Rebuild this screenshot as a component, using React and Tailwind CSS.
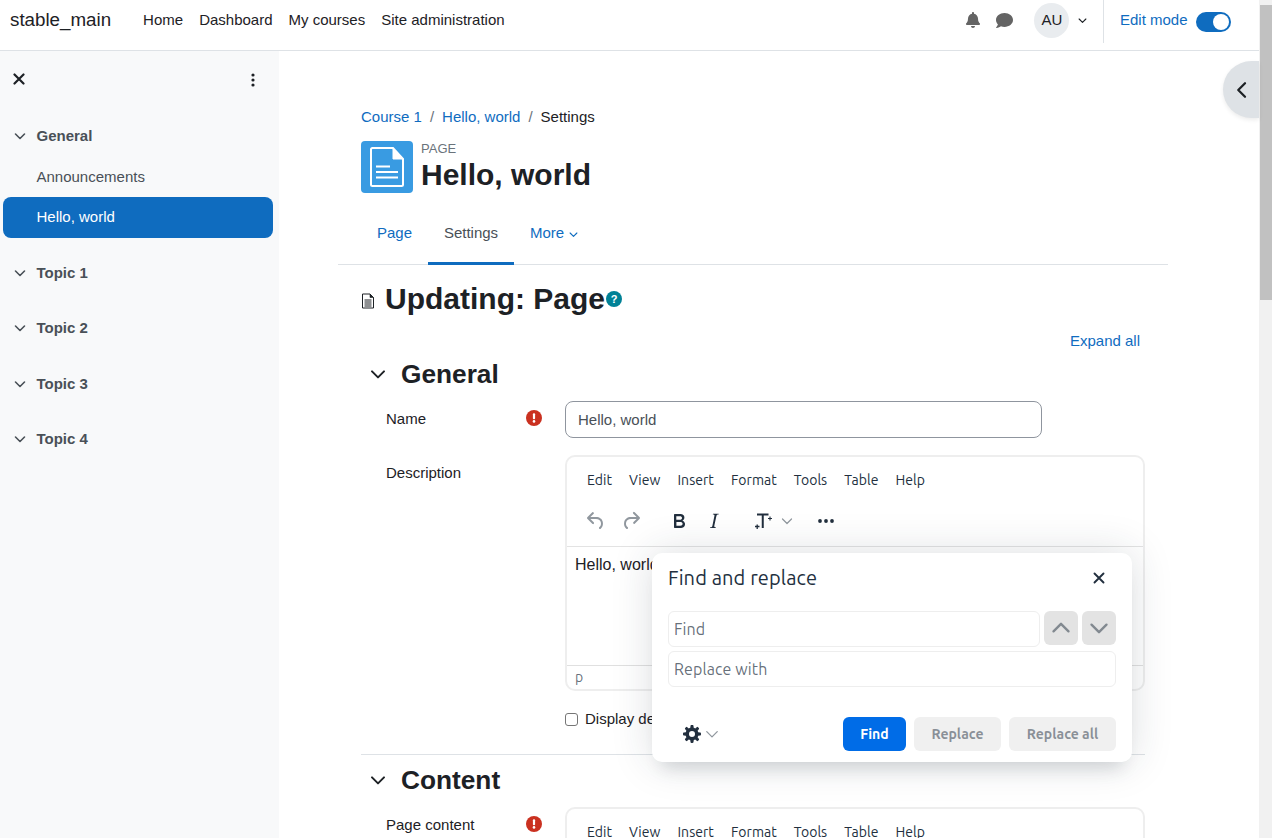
import React from "react";
import { FaBell, FaComment } from "react-icons/fa";

const SANS = "font-['Liberation_Sans',Arial,sans-serif]";
const TINY = "font-['Ubuntu','Noto_Sans',sans-serif]";

function Chevron({ className = "", size = 12, sw = 1.6 }) {
  return (
    <svg width={size} height={size} viewBox="0 0 12 12" className={className} fill="none" stroke="currentColor" strokeWidth={sw} strokeLinecap="round" strokeLinejoin="round">
      <path d="M1.5 4 6 8.5 10.5 4" />
    </svg>
  );
}

function XIcon({ size = 12, sw = 2 }) {
  return (
    <svg width={size} height={size} viewBox="0 0 12 12" fill="none" stroke="currentColor" strokeWidth={sw} strokeLinecap="round">
      <path d="M1.5 1.5 10.5 10.5M10.5 1.5 1.5 10.5" />
    </svg>
  );
}

function Required({ className = "" }) {
  return (
    <svg width="16" height="16" viewBox="0 0 16 16" className={className}>
      <circle cx="8" cy="8" r="8" fill="#ca3120" />
      <rect x="6.9" y="3.2" width="2.2" height="6" rx="1" fill="#fff" />
      <circle cx="8" cy="11.4" r="1.3" fill="#fff" />
    </svg>
  );
}

function TinyIcon({ d, className = "" }) {
  return (
    <svg width="24" height="24" viewBox="0 0 24 24" className={className} fill="currentColor">
      <path fillRule="evenodd" d={d} />
    </svg>
  );
}

const UNDO = "M6.4 8H12c3.7 0 6.2 2 6.8 5.1.6 2.7-.4 5.6-2.3 6.8a1 1 0 0 1-1-1.8c1.1-.7 1.8-2.7 1.4-4.6-.5-2.1-2.1-3.5-4.9-3.5H6.4l3.3 3.3a1 1 0 1 1-1.4 1.4l-5-5a1 1 0 0 1 0-1.4l5-5a1 1 0 0 1 1.4 1.4L6.4 8z";
const REDO = "M17.6 10H12c-2.8 0-4.4 1.4-4.9 3.5-.4 2 .3 3.9 1.4 4.6a1 1 0 1 1-1 1.8c-2-1.2-2.9-4.1-2.3-6.8.6-3 3-5.1 6.8-5.1h5.6l-3.3-3.3a1 1 0 1 1 1.4-1.4l5 5a1 1 0 0 1 0 1.4l-5 5a1 1 0 0 1-1.4-1.4l3.3-3.3z";
const BOLD = "M7.8 19c-.3 0-.5 0-.6-.2l-.2-.5V5.7c0-.2 0-.4.2-.5l.6-.2h5c1.5 0 2.7.3 3.5 1 .7.6 1.1 1.4 1.1 2.5a3 3 0 0 1-.6 1.9c-.4.6-1 1-1.6 1.2.4.1.9.3 1.3.6s.8.7 1 1.2c.4.4.5 1 .5 1.6 0 1.3-.4 2.3-1.3 3-.8.7-2.1 1-3.8 1H7.8zm5-8.3c.6 0 1.2-.1 1.6-.5.4-.3.6-.7.6-1.3 0-1.1-.8-1.7-2.3-1.7H9.3v3.5h3.4zm.5 6c.7 0 1.3-.1 1.7-.4.4-.4.6-.9.6-1.5s-.2-1-.7-1.4c-.4-.3-1-.4-2-.4H9.4v3.8h4z";
const ITALIC = "M16.7 4.7l-.1.9h-.3c-.6 0-1 0-1.4.3-.3.3-.4.6-.5 1.1l-2.1 9.8v.6c0 .5.4.8 1.4.8h.2l-.2.8H8l.2-.8h.2c1.1 0 1.8-.5 2-1.5l2-9.8.1-.5c0-.6-.4-.8-1.4-.8h-.3l.2-.9h5.8z";
const GEAR = "M20.1 13.5l-1.9.2a5.8 5.8 0 0 1-.6 1.5l1.2 1.5c.4.4.3 1 0 1.4l-.7.7a1 1 0 0 1-1.4 0l-1.5-1.2a6.2 6.2 0 0 1-1.5.6l-.2 1.9c0 .5-.5.9-1 .9h-1a1 1 0 0 1-1-.9l-.2-1.9a5.8 5.8 0 0 1-1.5-.6l-1.5 1.2a1 1 0 0 1-1.4 0l-.7-.7a1 1 0 0 1 0-1.4l1.2-1.5a6.2 6.2 0 0 1-.6-1.5l-1.9-.2a1 1 0 0 1-.9-1v-1c0-.5.4-1 .9-1l1.9-.2a5.8 5.8 0 0 1 .6-1.5L5.2 7.3a1 1 0 0 1 0-1.4l.7-.7a1 1 0 0 1 1.4 0l1.5 1.2a6.2 6.2 0 0 1 1.5-.6l.2-1.9c0-.5.5-.9 1-.9h1c.5 0 1 .4 1 .9l.2 1.9a5.8 5.8 0 0 1 1.5.6l1.5-1.2a1 1 0 0 1 1.4 0l.7.7c.3.4.4 1 0 1.4l-1.2 1.5a6.2 6.2 0 0 1 .6 1.5l1.9.2c.5 0 .9.5.9 1v1c0 .5-.4 1-.9 1zM12 15a3 3 0 1 0 0-6 3 3 0 0 0 0 6z";

function MenuBar() {
  return (
    <div className={`flex h-[37px] items-center pl-[20px] text-[14px] tracking-[0.04px] text-[#222f3e] ${TINY}`}>
      {["Edit", "View", "Insert", "Format", "Tools", "Table", "Help"].map((m) => (
        <span key={m} className="mr-[17px]">{m}</span>
      ))}
    </div>
  );
}

function SectionTitle({ children }) {
  return (
    <div className="flex items-center pl-[9px] text-[#1d2125]">
      <Chevron size={16} sw={1.5} />
      <h3 className="ml-[15px] text-[26.25px] font-bold leading-[32px]">{children}</h3>
    </div>
  );
}

function Topic({ label }) {
  return (
    <div className="flex h-[55.5px] items-center pl-[14px] text-[15px] font-bold text-[#495057]">
      <Chevron size={12} />
      <span className="ml-[10.5px]">{label}</span>
    </div>
  );
}

function Sidebar() {
  return (
    <aside className="w-[279px] shrink-0 bg-[#f8f9fa] pl-[3px] pr-[6px]">
      <div className="flex h-[61px] items-center justify-between pb-[5px] pl-[10px] pr-[18px] text-[#1d2125]">
        <XIcon size={12} sw={2.2} />
        <svg width="4" height="14" viewBox="0 0 4 14" fill="currentColor" className="mt-[2px]">
          <circle cx="2" cy="2" r="1.6" />
          <circle cx="2" cy="7" r="1.6" />
          <circle cx="2" cy="12" r="1.6" />
        </svg>
      </div>
      <div className="flex h-[48px] items-center pl-[11px] text-[15px] font-bold text-[#495057]">
        <Chevron size={12} />
        <span className="ml-[10.5px]">General</span>
      </div>
      <div className="flex h-[34px] items-center pl-[33.5px] text-[15px] text-[#495057]">Announcements</div>
      <div className="mt-[3px] flex h-[41px] items-center rounded-[8px] bg-[#0f6cbf] pl-[33.5px] text-[15px] text-white">Hello, world</div>
      <div className="mt-[7px] -ml-[3px]">
        {["Topic 1", "Topic 2", "Topic 3", "Topic 4"].map((t) => (
          <Topic key={t} label={t} />
        ))}
      </div>
    </aside>
  );
}

function Navbar() {
  return (
    <header className="flex h-[51px] shrink-0 items-start border-b border-[#dee2e6] bg-white pl-[10px] text-[#1d2125]">
      <div className="flex h-[40px] items-center text-[18.75px]">stable_main</div>
      <nav className="ml-[32px] flex h-[40px] items-center gap-[16px] text-[15px]">
        <span>Home</span>
        <span>Dashboard</span>
        <span>My courses</span>
        <span>Site administration</span>
      </nav>
      <div className="ml-auto flex items-start">
        <div className="flex h-[40px] items-center text-[#646464]">
          <FaBell size={16} />
          <FaComment size={17} className="ml-[15px]" />
        </div>
        <div className="ml-[21px] mt-[3px] flex h-[35px] w-[35px] items-center justify-center rounded-full bg-[#e9ecef] text-[15px]">AU</div>
        <div className="ml-[9px] mr-[16px] flex h-[40px] items-center">
          <Chevron size={9} sw={1.5} />
        </div>
        <div className="flex h-[43px] items-start border-l border-[#dee2e6] pl-[15.5px] pr-[28px]">
          <div className="flex h-[40px] items-center text-[15px] text-[#0f6cbf]">Edit mode</div>
          <div className="ml-[8.5px] mt-[12px] flex h-[20px] w-[35px] items-center justify-end rounded-full bg-[#0f6cbf] pr-[2px]">
            <div className="h-[16px] w-[16px] rounded-full bg-white" />
          </div>
        </div>
      </div>
    </header>
  );
}

function PageHeader() {
  return (
    <div className="px-[23px]">
      <div className="flex h-[21px] items-center text-[15px]">
        <span className="text-[#0f6cbf]">Course 1</span>
        <span className="mx-[8px] text-[#6a737b]">/</span>
        <span className="text-[#0f6cbf]">Hello, world</span>
        <span className="mx-[8px] text-[#6a737b]">/</span>
        <span>Settings</span>
      </div>
      <div className="mt-[13px] flex h-[52px]">
        <div className="flex h-[52px] w-[52px] items-center justify-center rounded-[4px] bg-[#399be2]">
          <svg width="34" height="40" viewBox="0 0 34 40" fill="none" stroke="#fff">
            <path d="M2.5 1H23L33 12V37.5A1.5 1.5 0 0 1 31.5 39H2.5A1.5 1.5 0 0 1 1 37.5V2.5A1.5 1.5 0 0 1 2.5 1Z" strokeWidth="2" />
            <path d="M23 1.5V12H32.5Z" fill="#fff" strokeWidth="1" />
            <path d="M6 19.5H20M6 25H28M6 30.5H28" strokeWidth="2.2" />
          </svg>
        </div>
        <div className="ml-[8px]">
          <div className="mt-[1px] text-[13px] leading-[14px] text-[#6a737b]">PAGE</div>
          <h1 className="mt-[1px] text-[30px] font-bold leading-[36px] text-[#1d2125]">Hello, world</h1>
        </div>
      </div>
    </div>
  );
}

function Tabs() {
  return (
    <div className="mt-[8px] flex h-[64px] border-b border-[#dee2e6] text-[15px]">
      <div className="ml-[23px] flex w-[67px] items-center pl-[16px] pt-[1px] text-[#0f6cbf]">Page</div>
      <div className="flex w-[86px] -mb-px items-center justify-center border-b-[3px] border-[#0f6cbf] pt-[3px] text-[#495057]">Settings</div>
      <div className="flex items-center gap-[5px] pl-[16px] pt-[1px] text-[#0f6cbf]">
        More
        <Chevron size={9} sw={1.5} className="mt-[2px]" />
      </div>
    </div>
  );
}

function Editor({ first }) {
  return (
    <div className="h-[236px] w-[580px] overflow-hidden rounded-[10px] border-2 border-[#eeeeee] bg-white">
      <div className="pt-[5px]">
        <MenuBar />
      </div>
      {first && (
        <>
          <div className="flex h-[47px] items-center pb-[3px] pl-[17px] text-[#222f3e]">
            <TinyIcon d={UNDO} className="text-[#222f3e]/50" />
            <TinyIcon d={REDO} className="ml-[11px] text-[#222f3e]/50" />
            <TinyIcon d={BOLD} className="ml-[24px]" />
            <TinyIcon d={ITALIC} className="ml-[11px]" />
            <svg width="20" height="20" viewBox="0 0 20 20" fill="none" stroke="currentColor" className="ml-[27px]">
              <path d="M4 3.5H15.5M9.75 3.5V17" strokeWidth="2" />
              <path d="M15 7.5H19M17 5.5V9.5" strokeWidth="1.1" />
              <path d="M2 15.5H6.5M4.2 13.5V18" strokeWidth="1.3" />
            </svg>
            <Chevron size={12} sw={1.2} className="ml-[8px] text-[#222f3e]/50" />
            <svg width="18" height="4" viewBox="0 0 18 4" fill="currentColor" className="ml-[24px]">
              <circle cx="3" cy="2" r="1.9" />
              <circle cx="9" cy="2" r="1.9" />
              <circle cx="15" cy="2" r="1.9" />
            </svg>
          </div>
          <div className="h-[119px] border-t border-[#e3e3e3] pl-[8px] pt-[8px] text-[16px] leading-[20px] text-[#1d2125]">Hello, world</div>
          <div className={`flex h-[24px] items-center border-t border-[#e0e0e0] pl-[8px] text-[14px] text-[#222f3e]/70 ${TINY}`}>p</div>
        </>
      )}
    </div>
  );
}

function Form() {
  return (
    <div className="px-[23px] text-[#1d2125]">
      <div className="flex h-[65px] items-start">
        <svg width="14" height="16" viewBox="0 0 14 16" fill="none" stroke="#1d2125" className="mt-[28px] shrink-0">
          <path d="M1.5 1H9L12.5 4.5V15H1.5Z" strokeWidth="1" />
          <path d="M9 1V4.5H12.5Z" fill="#1d2125" strokeWidth=".6" />
          <path d="M3.5 7H10.5M3.5 9H10.5M3.5 11H10.5M3.5 13H10.5" strokeWidth="1" />
        </svg>
        <h2 className="ml-[10px] mt-[16px] text-[30px] font-bold leading-[36px]">Updating: Page</h2>
        <div className="ml-[1px] mt-[26px] flex h-[16px] w-[16px] items-center justify-center rounded-full bg-[#008196] text-[11px] font-bold text-white">?</div>
      </div>
      <div className="flex h-[22px] items-center justify-end pr-[5px] text-[15px] text-[#0f6cbf]">Expand all</div>
      <div className="mt-[6px]">
        <SectionTitle>General</SectionTitle>
      </div>
      <div className="mt-[11px] flex h-[37px] items-start">
        <div className="flex h-[36px] w-[204px] items-center justify-between pl-[25px] pr-[23px] text-[15px]">
          <span>Name</span>
          <Required className="-mt-[2px]" />
        </div>
        <div className="flex h-[37px] w-[477px] items-center rounded-[8px] border border-[#8f959e] pl-[12px] pt-[1px] text-[15px] text-[#495057]">Hello, world</div>
      </div>
      <div className="mt-[17px] flex h-[236px]">
        <div className="flex h-[36px] w-[204px] items-center pl-[25px] text-[15px]">Description</div>
        <Editor first />
      </div>
      <div className="mt-[18px] flex h-[20px] items-center pl-[204px] text-[15px]">
        <span className="h-[13px] w-[13px] rounded-[3px] border border-[#767676] bg-white" />
        <span className="ml-[7px] whitespace-nowrap">Display description on course page</span>
      </div>
      <div className="mt-[25px] border-t border-[#dee2e6] pt-[9px]">
        <SectionTitle>Content</SectionTitle>
      </div>
      <div className="mt-[11px] flex">
        <div className="flex h-[36px] w-[204px] items-center justify-between pl-[25px] pr-[23px] text-[15px]">
          <span>Page content</span>
          <Required className="-mt-[2px]" />
        </div>
        <Editor />
      </div>
    </div>
  );
}

function FindDialog() {
  return (
    <div className={`absolute left-[652px] top-[553px] z-10 h-[209px] w-[480px] rounded-[10px] bg-white text-[#222f3e] shadow-[0_16px_16px_-10px_rgba(34,47,62,0.15),0_0_40px_1px_rgba(34,47,62,0.15)] ${TINY}`}>
      <div className="flex h-[50px] items-center justify-between pl-[16px] pr-[27px] text-[20px] tracking-[0.12px]">
        <span>Find and replace</span>
        <XIcon size={12} sw={1.9} />
      </div>
      <div className="mt-[8px] flex gap-[4px] px-[16px]">
        <div className="flex h-[36px] flex-1 items-center rounded-[6px] border border-[#eeeeee] pl-[5px] text-[16px] tracking-[0.1px] text-[#222f3e]/70">Find</div>
        <div className="flex h-[34px] w-[34px] items-center justify-center rounded-[6px] bg-[#e3e3e3] text-[#222f3e]/50">
          <Chevron size={20} sw={1.4} className="rotate-180" />
        </div>
        <div className="flex h-[34px] w-[34px] items-center justify-center rounded-[6px] bg-[#e3e3e3] text-[#222f3e]/50">
          <Chevron size={20} sw={1.4} />
        </div>
      </div>
      <div className="mx-[16px] mt-[4px] flex h-[36px] items-center rounded-[6px] border border-[#eeeeee] pl-[5px] text-[16px] tracking-[0.1px] text-[#222f3e]/70">Replace with</div>
      <div className="mt-[30px] flex items-center gap-[8px] pr-[16px] text-[14px] font-bold">
        <div className="ml-[28px] flex items-center">
          <TinyIcon d={GEAR} />
          <Chevron size={14} sw={1.1} className="ml-[1px] text-[#222f3e]/50" />
        </div>
        <div className="ml-auto flex h-[34px] w-[63px] items-center justify-center rounded-[6px] bg-[#006ce7] text-white">Find</div>
        <div className="flex h-[34px] w-[87px] items-center justify-center rounded-[6px] bg-[#f0f0f0] text-[#222f3e]/50">Replace</div>
        <div className="flex h-[34px] w-[107px] items-center justify-center rounded-[6px] bg-[#f0f0f0] text-[#222f3e]/50">Replace all</div>
      </div>
    </div>
  );
}

function Scrollbar() {
  return (
    <div className="h-full w-[13px] shrink-0 bg-[#f1f1f1] pl-[1px] pt-[5px]">
      <div className="h-[295px] bg-[#c1c1c1]" />
    </div>
  );
}

export default function App() {
  return (
    <div className={`relative flex h-[838px] w-[1272px] overflow-hidden bg-white ${SANS}`}>
      <div className="flex min-w-0 flex-1 flex-col">
        <Navbar />
        <div className="flex min-h-0 flex-1">
          <Sidebar />
          <main className="min-w-0 flex-1 pl-[59px] pr-[91px] pt-[56px] text-[#1d2125]">
            <PageHeader />
            <Tabs />
            <Form />
          </main>
        </div>
      </div>
      <Scrollbar />
      <div className="absolute left-[1223px] top-[61px] flex h-[57px] w-[36px] items-center justify-center rounded-l-full bg-[#dee2e6] pl-[2px] shadow-[0_2px_4px_rgba(0,0,0,0.08)]">
        <Chevron size={18} sw={1.5} className="rotate-90 text-[#1d2125]" />
      </div>
      <FindDialog />
    </div>
  );
}
